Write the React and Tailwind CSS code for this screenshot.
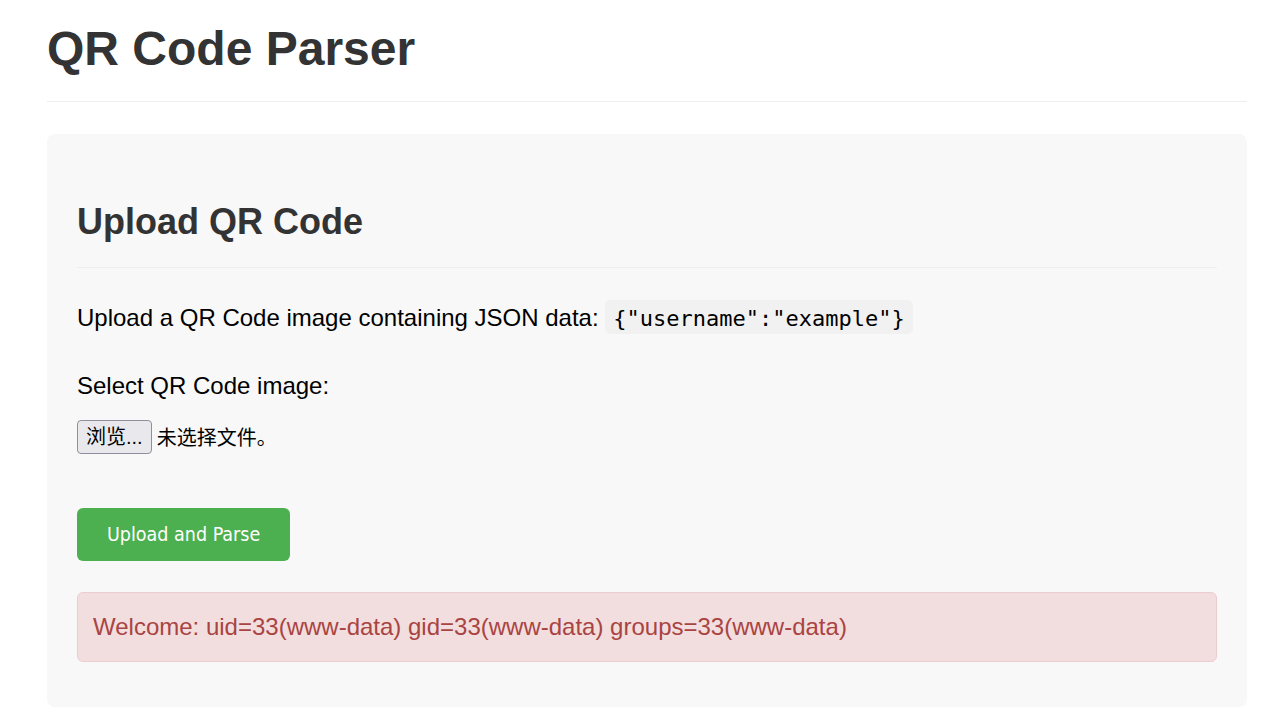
import React from 'react'

const App = () => {
  return (
    <div className="min-h-screen bg-white font-['Liberation_Sans','Noto_Sans_CJK_SC',sans-serif]">
      <div className="ml-[47px] w-[1200px]">
        <div className="pt-[21px] pb-[25px] border-b border-[#eeeeee]">
          <h1 className="text-[48px] leading-[55px] font-bold text-[#333333]">QR Code Parser</h1>
        </div>

        <div className="mt-[32px] bg-[#f8f8f8] rounded-[8px] px-[30px] pt-[30px] pb-[45px]">
          <h2 className="mt-[37px] text-[36px] leading-[41px] font-bold text-[#333333] pb-[25px] border-b border-[#eeeeee]">
            Upload QR Code
          </h2>

          <p className="mt-[32px] text-[24px] leading-[28px] text-black">
            Upload a QR Code image containing JSON data:{' '}
            <code className="inline-block bg-[#f1f1f1] rounded-[5px] px-[8px] pt-[9px] pb-[5px] text-[22px] leading-[20px] font-['DejaVu_Sans_Mono',monospace] text-black">
              {'{"username":"example"}'}
            </code>
          </p>

          <div className="mt-[38px] text-[24px] leading-[28px] text-black">Select QR Code image:</div>

          <div className="mt-[20px] flex items-center h-[34px]">
            <div className="h-[34px] px-[8px] flex items-center bg-[#e9e9ed] border border-[#8f8f9d] rounded-[4px] text-[20px] text-black">
              浏览...
            </div>
            <span className="ml-[5px] text-[20px] text-black font-['Noto_Sans_CJK_SC',sans-serif]">未选择文件。</span>
          </div>

          <div className="mt-[54px]">
            <button className="h-[53px] px-[30px] bg-[#4caf50] rounded-[6px] text-white text-[19.5px] font-['DejaVu_Sans_Condensed','DejaVu_Sans',sans-serif]">
              Upload and Parse
            </button>
          </div>

          <div className="mt-[31px] border border-[#ebccd1] bg-[#f2dede] rounded-[6px] px-[15px] py-[21px] text-[24px] leading-[26px] text-[#a94442]">
            Welcome: uid=33(www-data) gid=33(www-data) groups=33(www-data)
          </div>
        </div>
      </div>
    </div>
  )
}

export default App
